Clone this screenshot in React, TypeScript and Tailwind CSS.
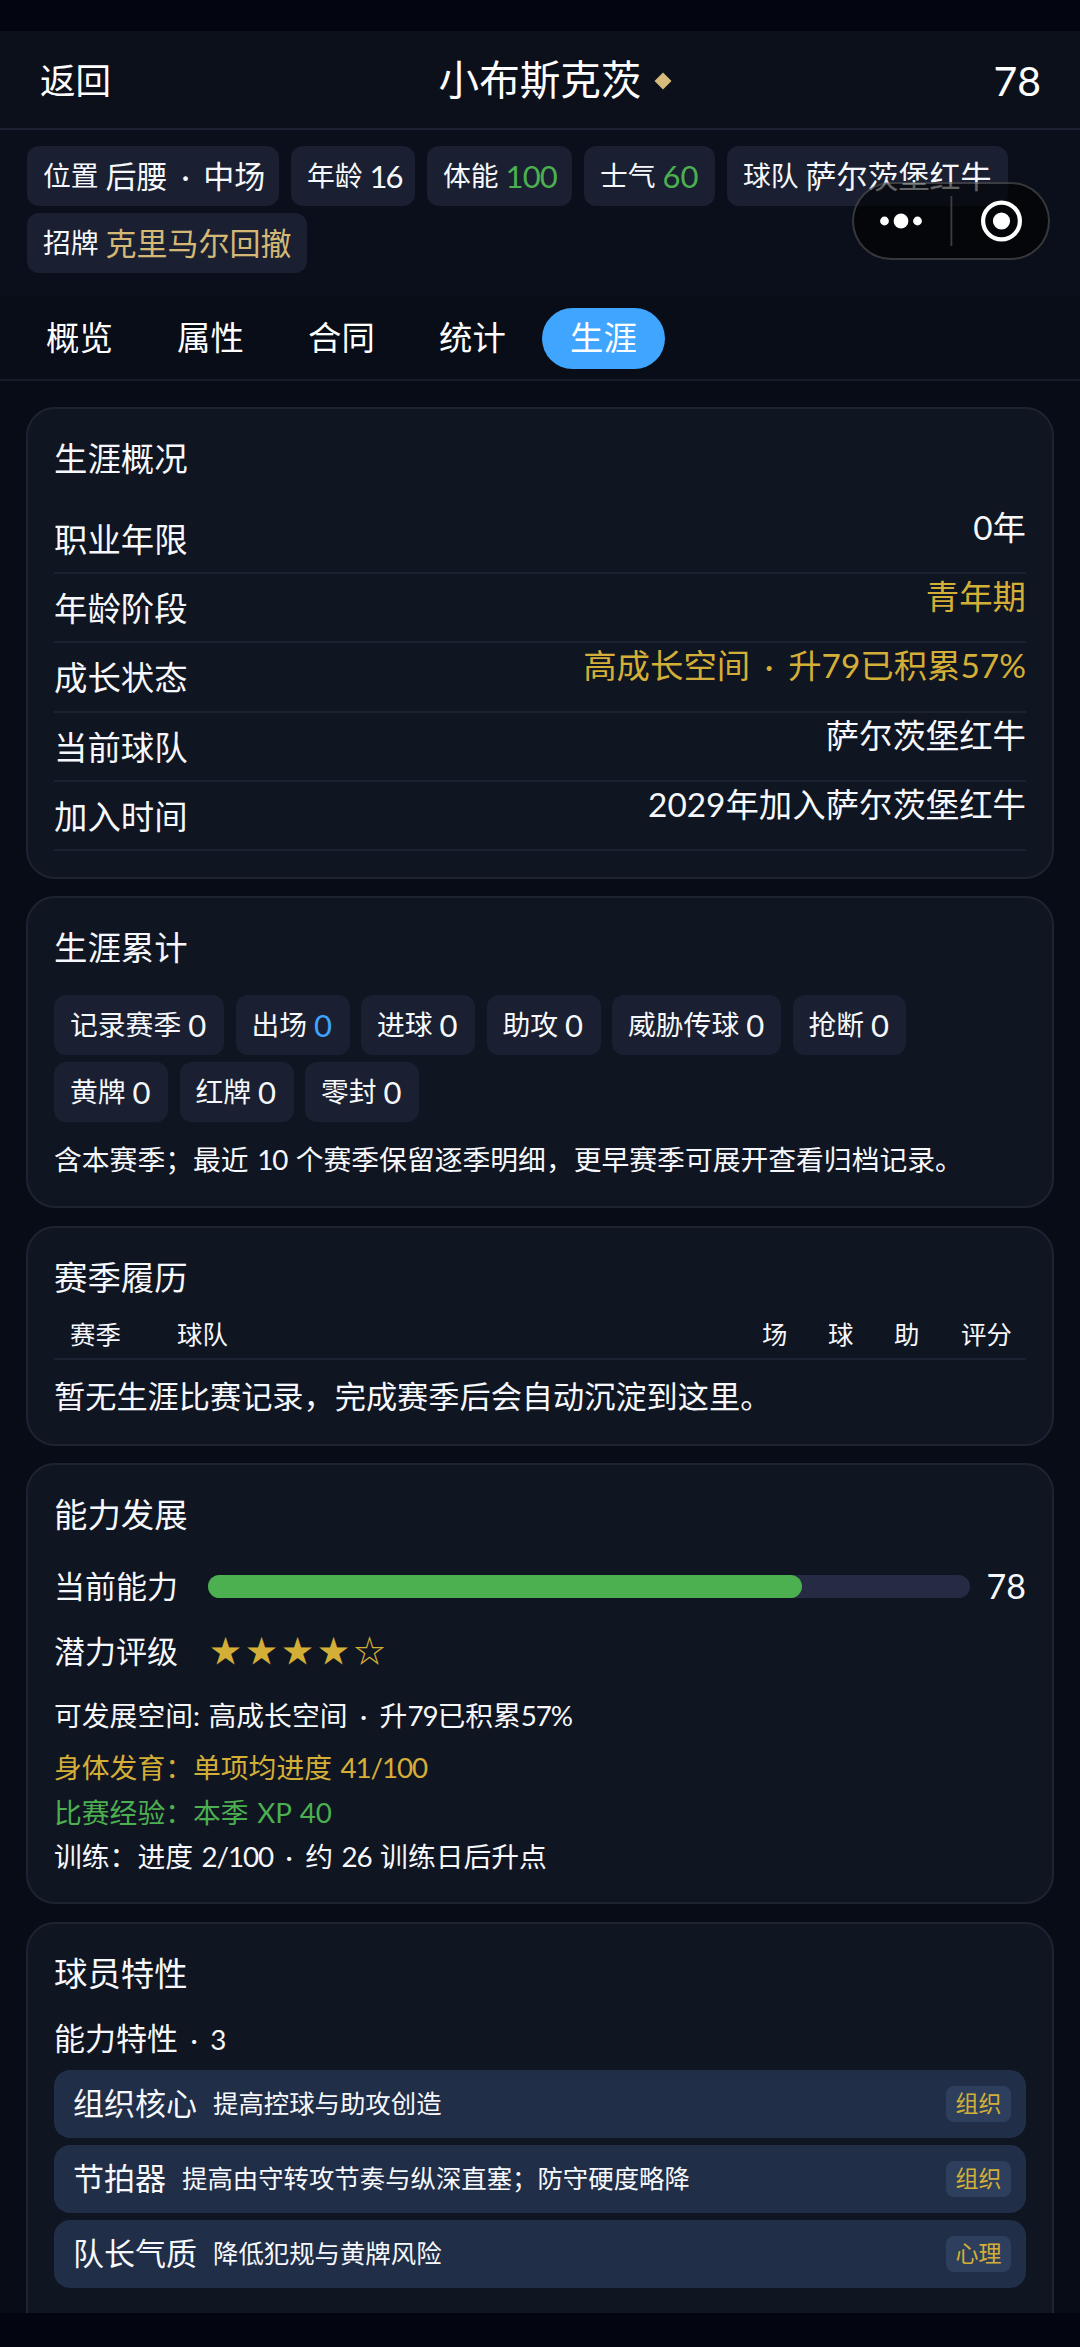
import React from "react";
import clsx from "clsx";

const tabs = ["概览", "属性", "合同", "统计", "生涯"];

const overview = [
  { label: "职业年限", value: "0年" },
  { label: "年龄阶段", value: "青年期", gold: true },
  { label: "成长状态", value: "高成长空间 · 升79已积累57%", gold: true },
  { label: "当前球队", value: "萨尔茨堡红牛" },
  { label: "加入时间", value: "2029年加入萨尔茨堡红牛" },
];

const totals = [
  { label: "记录赛季", value: "0", width: "w-[170px]" },
  { label: "出场", value: "0", width: "w-[114px]", color: "text-[#3fa4ff]" },
  { label: "进球", value: "0", width: "w-[114px]" },
  { label: "助攻", value: "0", width: "w-[114px]" },
  { label: "威胁传球", value: "0", width: "w-[169px]" },
  { label: "抢断", value: "0", width: "w-[113px]" },
  { label: "黄牌", value: "0", width: "w-[114px]" },
  { label: "红牌", value: "0", width: "w-[114px]" },
  { label: "零封", value: "0", width: "w-[114px]" },
];

const traits = [
  { name: "组织核心", desc: "提高控球与助攻创造", tag: "组织" },
  { name: "节拍器", desc: "提高由守转攻节奏与纵深直塞；防守硬度略降", tag: "组织" },
  { name: "队长气质", desc: "降低犯规与黄牌风险", tag: "心理" },
];

// Gives the middle dot a wider cell, and optionally tightens the figures
const Mixed: React.FC<{ text: string; tight?: boolean }> = ({ text, tight }) => (
  <>
    {text.split(/(·|[0-9/%]+)/).map((part, i) => {
      if (part === "·") {
        return (
          <span key={i} className="inline-block w-[0.54em] text-center">
            ·
          </span>
        );
      }
      if (tight && /^[0-9/%]/.test(part)) {
        return (
          <span key={i} className="tracking-[-0.04em]">
            {part}
          </span>
        );
      }
      return part;
    })}
  </>
);

interface ChipProps {
  label: string;
  value: string;
  width: string;
  color?: string;
}

const Chip: React.FC<ChipProps> = ({ label, value, width, color }) => (
  <div
    className={clsx(
      "flex h-[60px] items-center gap-[7px] rounded-xl bg-[#1a2031] pl-[16px] leading-none",
      width
    )}
  >
    <span className="text-[27.8px]">{label}</span>
    <span className={clsx("text-[31px]", color)}>
      <Mixed text={value} />
    </span>
  </div>
);

interface CardProps {
  title: string;
  className: string;
  children: React.ReactNode;
}

const Card: React.FC<CardProps> = ({ title, className, children }) => (
  <section
    className={clsx(
      "shrink-0 rounded-[29px] border-2 border-[#1e2332] bg-[#101522] px-[26px] pt-[32px]",
      className
    )}
  >
    <h2 className="h-[34px] text-[33.4px] leading-[34px]">{title}</h2>
    {children}
  </section>
);

const Capsule = () => (
  <div className="absolute left-[852px] top-[182px] flex h-[78px] w-[198px] items-center rounded-full border-2 border-white/20 bg-black/60">
    <svg width="194" height="74" viewBox="0 0 194 74" fill="#fff">
      <circle cx="30.5" cy="37" r="4.4" />
      <circle cx="47" cy="37" r="7.4" />
      <circle cx="63.5" cy="37" r="4.4" />
      <rect x="96.5" y="12" width="1.8" height="50" fill="#3c3e43" />
      <circle cx="147.5" cy="37" r="18.4" fill="none" stroke="#fff" strokeWidth="4.2" />
      <circle cx="147.5" cy="37" r="8.6" />
    </svg>
  </div>
);

const App: React.FC = () => {
  return (
    <div className="relative flex h-[2347px] w-[1080px] flex-col overflow-hidden whitespace-nowrap bg-[#080c16] font-[Lato,'Noto_Sans_CJK_SC',sans-serif] text-[#f6f8fc] [word-spacing:0.09em]">
      <div className="h-[31px] shrink-0 bg-[#030610]" />
      <header className="flex h-[99px] shrink-0 items-center justify-between border-b-2 border-[#1c2134] bg-[#0c101b] pl-[40px] pr-[39px] pt-[2px] leading-none text-white">
        <span className="w-[110px] text-[35.5px]">返回</span>
        <div className="flex items-center gap-[13px]">
          <h1 className="text-[40.6px]">小布斯克茨</h1>
          <svg width="18" height="18" viewBox="0 0 18 18">
            <path d="M9 0.5 17.5 9 9 17.5 0.5 9Z" fill="#d6bb7c" />
          </svg>
        </div>
        <span className="w-[80px] text-right text-[41px]">78</span>
      </header>

      <div className="flex h-[165px] shrink-0 flex-wrap content-start gap-x-[12px] gap-y-[7px] bg-[#0b0f1b] pl-[27px] pt-4">
        <Chip label="位置" value="后腰 · 中场" width="w-[252px]" color="[word-spacing:0.05em]" />
        <Chip label="年龄" value="16" width="w-[124px]" color="tracking-[-0.07em]" />
        <Chip label="体能" value="100" width="w-[145px]" color="text-[#4caf50] tracking-[-0.03em]" />
        <Chip label="士气" value="60" width="w-[131px]" color="text-[#4caf50]" />
        <Chip label="球队" value="萨尔茨堡红牛" width="w-[281px]" />
        <Chip label="招牌" value="克里马尔回撤" width="w-[280px]" color="text-[#d4b876]" />
      </div>

      <nav className="flex h-[86px] shrink-0 items-center gap-[8px] border-b-2 border-[#171c2b] bg-[#090d17] pl-[18px] pt-[2px]">
        {tabs.map((tab) => (
          <button
            key={tab}
            className={clsx(
              "h-[61px] w-[123px] rounded-full text-[33.4px] leading-none text-white",
              tab === "生涯" && "bg-[#40a5ff]"
            )}
          >
            {tab}
          </button>
        ))}
      </nav>

      <main className="flex min-h-0 grow flex-col gap-[17.5px] overflow-hidden px-[26px] pt-[25.5px]">
        <Card title="生涯概况" className="h-[472px]">
          <dl className="mt-[30px]">
            {overview.map((row) => (
              <div
                key={row.label}
                className="flex h-[69.4px] justify-between border-b-2 border-[#1c2231] text-[33.4px] leading-none"
              >
                <dt className="pt-[18px]">{row.label}</dt>
                <dd className={clsx("pt-[6px]", row.gold && "text-[#d4af37]")}>
                  <Mixed text={row.value} />
                </dd>
              </div>
            ))}
          </dl>
        </Card>

        <Card title="生涯累计" className="h-[312px]">
          <div className="mt-[31px] flex flex-wrap gap-x-[11.5px] gap-y-[7px]">
            {totals.map((item) => (
              <Chip key={item.label} {...item} />
            ))}
          </div>
          <p className="mt-[23px] text-[27.8px] leading-[30px]">
            <Mixed
              text="含本赛季；最近 10 个赛季保留逐季明细，更早赛季可展开查看归档记录。"
              tight
            />
          </p>
        </Card>

        <Card title="赛季履历" className="h-[220px]">
          <div className="mt-[23px] flex h-[43px] border-b-2 border-[#1c2231] px-4 text-[25.4px] leading-[34px]">
            <span className="w-[107px]">赛季</span>
            <span className="grow">球队</span>
            <span className="w-[66px]">场</span>
            <span className="w-[66px]">球</span>
            <span className="w-[67px]">助</span>
            <span className="w-[49px]">评分</span>
          </div>
          <p className="mt-[19px] text-[31.2px] leading-[34px]">
            暂无生涯比赛记录，完成赛季后会自动沉淀到这里。
          </p>
        </Card>

        <Card title="能力发展" className="h-[441px]">
          <div className="mt-[38px] flex h-[34px] items-center leading-none">
            <span className="w-[154px] text-[31px]">当前能力</span>
            <div className="h-[23px] w-[762px] rounded-full bg-[#252b42]">
              <div className="h-full w-[78%] rounded-full bg-[#4caf50]" />
            </div>
            <span className="ml-auto text-[34px]">78</span>
          </div>
          <div className="mt-[31px] flex h-[34px] items-center text-[31px] leading-none">
            <span className="w-[156px]">潜力评级</span>
            <span className="pb-[5px] font-['Noto_Sans_CJK_SC',sans-serif] tracking-[5px] text-[#d4af37]">
              ★★★★☆
            </span>
          </div>
          <div className="mt-[33px] text-[27.8px] leading-[30px]">
            <p>
              <Mixed text="可发展空间: 高成长空间 · 升79已积累57%" tight />
            </p>
            <p className="mt-[22px] text-[#d4af37]">
              <Mixed text="身体发育：单项均进度 41/100" tight />
            </p>
            <p className="mt-[14.5px] text-[#4caf50]">比赛经验：本季 XP 40</p>
            <p className="mt-[14.5px]">
              <Mixed text="训练：进度 2/100 · 约 26 训练日后升点" tight />
            </p>
          </div>
        </Card>

        <Card title="球员特性" className="h-[460px]">
          <h3 className="mt-[31.5px] text-[31px] leading-[34px]">
            能力特性
            <span className="text-[27.8px]">
              <Mixed text=" · 3" />
            </span>
          </h3>
          <ul className="mt-[13px] flex flex-col gap-[7.5px]">
            {traits.map((trait) => (
              <li
                key={trait.name}
                className="flex h-[67.5px] items-center rounded-2xl bg-[#202e47] pl-[19px] pr-[15px] leading-none"
              >
                <span className="text-[31px]">{trait.name}</span>
                <span className="ml-[16px] text-[25.4px]">{trait.desc}</span>
                <span className="ml-auto flex h-[36px] w-[65px] items-center justify-center rounded-lg bg-[#2d3f5d] text-[23px] text-[#d4af37]">
                  {trait.tag}
                </span>
              </li>
            ))}
          </ul>
        </Card>
      </main>
      <div className="h-[34px] shrink-0 bg-[#030610]" />
      <Capsule />
    </div>
  );
};

export default App;
